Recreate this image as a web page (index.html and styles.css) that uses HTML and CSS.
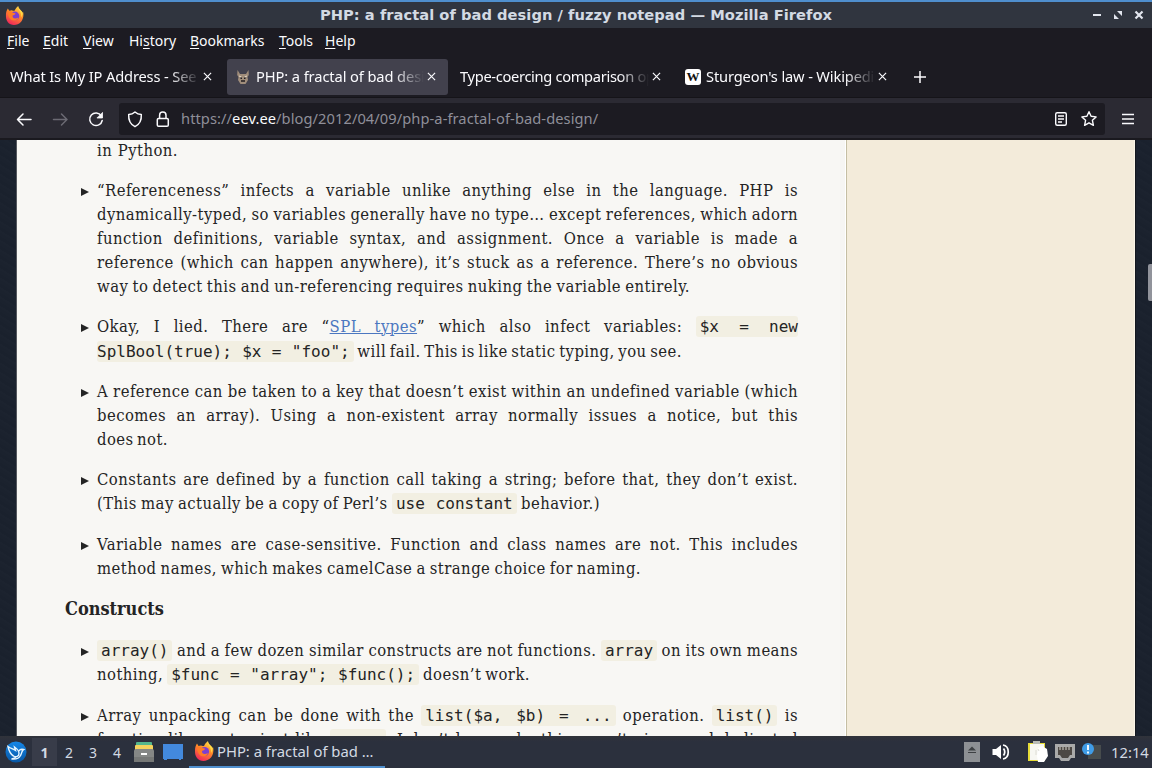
FILE: index.html
```html
<!DOCTYPE html>
<html lang="en">
<head>
<meta charset="utf-8">
<title>PHP: a fractal of bad design / fuzzy notepad</title>
<link rel="stylesheet" href="styles.css">
</head>
<body>
<svg class="defs" width="0" height="0">
  <defs>
    <linearGradient id="flame" x1="0.8" y1="0" x2="0.3" y2="1"><stop offset="0" stop-color="#ffe14a"/><stop offset=".45" stop-color="#ff8a28"/><stop offset="1" stop-color="#f0265c"/></linearGradient>
    <linearGradient id="bird" x1="0" y1="0" x2="0" y2="1"><stop offset="0" stop-color="#1687e8"/><stop offset="1" stop-color="#0757a5"/></linearGradient>
    <symbol id="fox" viewBox="0 0 20 20">
      <path d="M1 9C1 6 2 4 3 2.500L4.500 5L7 4.500C8 5 9 5 10 5C11 3 12 1.500 14 0C14 3 17 4 18.500 7L19 6C20 10 19 14 17 16.500C13 21 6 21 3 17C1 14.500 1 12 1 9Z" fill="url(#flame)"/>
      <circle cx="10.500" cy="10.500" r="4.600" fill="#7d3fd0"/>
      <path d="M3 6C5 5.500 7 6 8 7L11 7.500C11 9 9 9.500 8 10C7.500 13 11 14 14 12C13 16 7 16.500 5 13C3.500 11 3 8 3 6Z" fill="#ff7b26"/>
      <path d="M14 .5C13 4 18 6 17 12C19 9 18.500 7 18 6C16 4 14 3 14 .5Z" fill="#ffdc45"/>
    </symbol>
  </defs>
</svg>
<div class="desktop">
  <header class="titlebar">
    <svg class="title-fox" viewBox="0 0 20 20"><use href="#fox"/></svg>
    <div class="title">PHP: a fractal of bad design / fuzzy notepad — Mozilla Firefox</div>
    <svg class="win-buttons" viewBox="0 0 52 12"><path d="M1 6h8M43.500 2.500l7 7M50.500 2.500l-7 7" stroke="#e2e6ee" stroke-width="2.200" fill="none"/><path d="M25 2h5v5zM22 5v5h5z" fill="#e2e6ee"/></svg>
  </header>
  <nav class="menubar">
    <span class="m1"><u>F</u>ile</span><span class="m2"><u>E</u>dit</span><span class="m3"><u>V</u>iew</span><span class="m4">Hi<u>s</u>tory</span><span class="m5"><u>B</u>ookmarks</span><span class="m6"><u>T</u>ools</span><span class="m7"><u>H</u>elp</span>
  </nav>
  <div class="tabs">
    <div class="tab t1"><span class="label">What Is My IP Address - See</span><svg class="x" viewBox="0 0 10 10"><path d="M1 1l8 8M9 1l-8 8"/></svg></div>
    <div class="tab t2 active">
      <svg class="fav" viewBox="0 0 14 14"><path d="M1.500 0l2.500 4h6l2.500-4 .3 5-1.300 2 .5 3-2.500 4h-5L2 10l.5-3-1.300-2z" fill="#a08d7b"/><path d="M3 6l2.500 1M11 6L8.500 7" stroke="#e4d9c8"/><path d="M4.500 8.200h1.500M8 8.200h1.500M5 11h4" stroke="#201d20" stroke-width="1.500"/></svg>
      <span class="label">PHP: a fractal of bad design</span><svg class="x" viewBox="0 0 10 10"><path d="M1 1l8 8M9 1l-8 8"/></svg></div>
    <div class="tab t3"><span class="label">Type-coercing comparison operators</span><svg class="x" viewBox="0 0 10 10"><path d="M1 1l8 8M9 1l-8 8"/></svg></div>
    <div class="tab t4"><span class="wiki">W</span><span class="label">Sturgeon's law - Wikipedia</span><svg class="x" viewBox="0 0 10 10"><path d="M1 1l8 8M9 1l-8 8"/></svg></div>
    <svg class="plus" viewBox="0 0 12 12"><path d="M6 0v12M0 6h12"/></svg>
  </div>
  <div class="navbar">
    <svg class="nav-icons" viewBox="0 0 119 38" fill="none" stroke="#fbfbfe" stroke-width="1.500" stroke-linecap="round" stroke-linejoin="round">
      <path d="M31 19.500H17.500M23 14l-5.500 5.500L23 25"/>
      <path d="M53.500 19.500H67M61.500 14l5.500 5.500-5.500 5.500" stroke="#6b6a73"/>
      <path d="M101.300 15.800A6.300 6.300 0 1 0 102.200 20.500"/><path d="M102.500 12.800v5.200h-5.200z" fill="#fbfbfe" stroke-width=".8"/>
    </svg>
    <div class="urlbar">
      <svg class="url-icons" viewBox="0 0 62 32" fill="none" stroke="#fbfbfe" stroke-width="1.500" stroke-linejoin="round">
        <path d="M16 9c2 1.800 4 2.400 6.300 2.400.4 6-1.700 10-6.300 12.300-4.600-2.300-6.700-6.300-6.300-12.300C12 11.400 14 10.800 16 9z"/>
        <rect x="38.300" y="15.500" width="11" height="7.700" rx="1.300"/><path d="M40.600 15.500v-3.200a3.200 3.200 0 0 1 6.400 0v3.200"/>
      </svg>
      <div class="url">https://<b>eev.ee</b>/blog/2012/04/09/php-a-fractal-of-bad-design/</div>
      <svg class="page-icons" viewBox="0 0 44 18" fill="none" stroke="#fbfbfe" stroke-width="1.400" stroke-linejoin="round">
        <rect x="1.700" y="2.700" width="10.600" height="12.600" rx="1.500"/><path d="M4 6h6M4 9h6M4 12h4"/>
        <path d="M35 1.700l2.100 4.600 5 .6-3.700 3.400 1 5-4.400-2.500-4.400 2.500 1-5-3.700-3.400 5-.6z"/>
      </svg>
    </div>
    <svg class="burger" viewBox="0 0 12 12"><path d="M0 1.500h12M0 6h12M0 10.500h12"/></svg>
  </div>
  <div class="viewport">
    <main class="article">
      <div class="item first"><p class="ln" style="width:81px">in Python.</p></div>
      <div class="item mark">
        <p class="ln">“Referenceness” infects a variable unlike anything else in the language. PHP is</p>
        <p class="ln">dynamically-typed, so variables generally have no type… except references, which adorn</p>
        <p class="ln">function definitions, variable syntax, and assignment. Once a variable is made a</p>
        <p class="ln">reference (which can happen anywhere), it’s stuck as a reference. There’s no obvious</p>
        <p class="ln" style="width:593px">way to detect this and un-referencing requires nuking the variable entirely.</p>
      </div>
      <div class="item mark low">
        <p class="ln">Okay, I lied. There are “<a>SPL types</a>” which also infect variables: <code class="open">$x = new</code></p>
        <p class="ln" style="width:585px"><code class="close">SplBool(true); $x = "foo";</code> will fail. This is like static typing, you see.</p>
      </div>
      <div class="item mark">
        <p class="ln">A reference can be taken to a key that doesn’t exist within an undefined variable (which</p>
        <p class="ln">becomes an array). Using a non-existent array normally issues a notice, but this</p>
        <p class="ln" style="width:71px">does not.</p>
      </div>
      <div class="item mark coded">
        <p class="ln">Constants are defined by a function call taking a string; before that, they don’t exist.</p>
        <p class="ln" style="width:503px">(This may actually be a copy of Perl’s <code>use constant</code> behavior.)</p>
      </div>
      <div class="item mark">
        <p class="ln">Variable names are case-sensitive. Function and class names are not. This includes</p>
        <p class="ln" style="width:544px">method names, which makes camelCase a strange choice for naming.</p>
      </div>
      <h3>Constructs</h3>
      <div class="item mark coded">
        <p class="ln"><code>array()</code> and a few dozen similar constructs are not functions. <code>array</code> on its own means</p>
        <p class="ln" style="width:433px">nothing, <code>$func = "array"; $func();</code> doesn’t work.</p>
      </div>
      <div class="item mark">
        <p class="ln">Array unpacking can be done with the <code>list($a, $b) = ...</code> operation. <code>list()</code> is</p>
        <p class="ln">function-like syntax just like <code>array</code>. I don’t know why this wasn’t given real dedicated</p>
      </div>
    </main>
    <aside class="side"></aside>
    <div class="scroll-thumb"></div>
  </div>
  <footer class="taskbar">
    <svg class="menu-logo" viewBox="0 0 22 22"><circle cx="11" cy="11" r="10.500" fill="url(#bird)"/><path d="M3 5.500c3 2 5 2.500 7.500 4L9.500 6c3 2 4.500 3.500 4.500 6.500 0 3-3 4-5.500 2.500C5.500 13.500 4 10 3 5.500zM14 10c1-2 2.500-2 4.500-1.500-2 1-1.500 4-3 6-1.500 3-5 4-9 3.500 3-.5 4-1.500 5-2.500" fill="none" stroke="#e7f5ff" stroke-width="1.400"/></svg>
    <div class="desks"><span class="on">1</span><span>2</span><span>3</span><span>4</span></div>
    <svg class="files" viewBox="0 0 22 22"><path d="M3 2q0-1 1-1h14q1 0 1 1v4H3z" fill="#54b78d"/><path d="M2 5q0-1 1-1h16q1 0 1 1v5H2z" fill="#f5d35d"/><path d="M1 10q0-2 2-2h16q2 0 2 2v11H1z" fill="#858786"/><path d="M1 16h20v5H1z" fill="#767877"/><rect x="8" y="12" width="6" height="2" fill="#fff"/></svg>
    <svg class="show" viewBox="0 0 20 16"><path d="M0 0h20v15h-2v1h-2v-1H4v1H1v-1H0z" fill="#4389dd"/></svg>
    <div class="task"><svg viewBox="0 0 20 20"><use href="#fox"/></svg><span>PHP: a fractal of bad …</span></div>
    <svg class="tray" viewBox="0 0 140 24">
      <rect x="2" y="2" width="16" height="20" fill="#8d9094"/><path d="M6 10.500l4-4 4 4zM6 12h8v1H6z" fill="#3d4043"/>
      <path d="M30.500 9h3.500l5-4v14l-5-4h-3.500z" fill="#fff"/><path d="M41.500 8.500q2.500 3.500 0 7M41 5c7 1 7 13 0 14" stroke="#fff" stroke-width="1.700" fill="none"/>
      <path d="M66 3h17v18H66z" fill="#e6dc38"/><path d="M68 4h14v16H68z" fill="#f7f7f2"/><path d="M71 1h7v3h-7z" fill="#b9bbb5"/><path d="M76 8l4-2 5 3 1 7-4 6h-6l-1-6z" fill="#fff"/><path d="M74 10v5M76 9l1 2" stroke="#dcdcd4"/>
      <path d="M93 4h20v14h-4l-2 3h-8l-2-3h-4z" fill="#a9a9a9"/><path d="M96 7h14v8h-2l-2 3h-6l-2-3h-2z" fill="#4d4844"/><path d="M98 7v3M101 7v3M104 7v3M107 7v3" stroke="#d5d2ca"/>
      <path d="M126 5h13v14h-13z" fill="#474c4d"/><circle cx="126" cy="9" r="6" fill="#3f9be6"/><path d="M126 5v5M126 11.500v2" stroke="#fff" stroke-width="1.800"/>
    </svg>
    <div class="clock">12:14</div>
  </footer>
</div>
</body>
</html>
```
FILE: styles.css
```css
* { box-sizing: border-box; }
body { margin: 0; background: #1c1b22; overflow: hidden; }
svg { display: block; flex: none; overflow: visible; }
.defs { position: absolute; }
.desktop { width: 1152px; height: 768px; display: flex; flex-direction: column; overflow: hidden; font-family: "Noto Sans", sans-serif; color: #fbfbfe; }

.titlebar { height: 28px; flex: none; display: flex; align-items: center; border-top: 2px solid #4f8fce; background: #30353f; padding: 0 8px 0 5px; }
.title-fox { width: 19px; height: 19px; }
.title { flex: 1; text-align: center; padding: 0 0 1px 36px; font: bold 14.670px "DejaVu Sans", sans-serif; letter-spacing: .03px; color: #d3dae3; white-space: nowrap; }
.win-buttons { width: 52px; height: 12px; }

.menubar { height: 27px; flex: none; display: flex; align-items: center; padding: 0 0 2px 7px; font-size: 14px; }
.menubar span { white-space: nowrap; }
.menubar u { text-underline-offset: 2px; text-decoration-thickness: 1px; }
.m1 { width: 36px; } .m2 { width: 40px; } .m3 { width: 46px; } .m4 { width: 61px; } .m5 { width: 89px; } .m6 { width: 46px; }

.tabs { height: 43px; flex: none; display: flex; align-items: center; padding-top: 1px; font-size: 14.670px; border-bottom: 1px solid #151419; }
.tab { height: 36px; display: flex; align-items: center; border-radius: 3px; flex: none; }
.tab .label { flex: 1; min-width: 0; overflow: hidden; white-space: nowrap; padding-bottom: 1px; -webkit-mask-image: linear-gradient(to right, #000 calc(100% - 30px), transparent); mask-image: linear-gradient(to right, #000 calc(100% - 30px), transparent); }
.t1 { width: 227px; padding: 0 15px 0 10px; }
.t1 .label { letter-spacing: -.15px; }
.t2 { width: 221px; padding: 0 12px 0 9px; }
.t2 .label { letter-spacing: -.1px; }
.t3 { width: 227px; padding: 0 14px 0 12px; }
.t3 .label { letter-spacing: -.32px; }
.t4 { width: 225px; padding: 0 13px 0 10px; }
.t4 .label { letter-spacing: -.15px; }
.active { background: #42414d; }
.x { width: 9px; height: 9px; margin-left: 3px; }
.x path { stroke: #fbfbfe; stroke-width: 1.300; }
.fav { width: 14px; height: 14px; margin-right: 6px; }
.wiki { width: 16px; height: 16px; margin-right: 5px; border-radius: 3px; background: #fff; color: #111; font: bold 13px/16px "Liberation Serif", serif; display: flex; justify-content: center; }
.plus { width: 12px; height: 12px; margin-left: 14px; }
.plus path, .burger path { stroke: #fbfbfe; stroke-width: 1.500; }

.navbar { height: 42px; flex: none; display: flex; align-items: center; background: #2b2a33; border-bottom: 2px solid #1a191f; padding-top: 2px; }
.nav-icons { width: 119px; height: 38px; }
.urlbar { width: 986px; height: 32px; display: flex; align-items: center; background: #1c1b22; border-radius: 3px; }
.url-icons { width: 62px; height: 32px; }
.url { flex: 1; font-size: 14.670px; letter-spacing: .07px; color: #8f8f99; white-space: nowrap; padding-bottom: 2px; }
.url b { font-weight: normal; color: #fbfbfe; }
.page-icons { width: 44px; height: 18px; margin-right: 7px; }
.burger { width: 12px; height: 12px; margin-left: 17px; }

.viewport { height: 596px; flex: none; position: relative; display: flex; overflow: hidden; padding-left: 17px; background: repeating-linear-gradient(32deg, #1b222e 0 3px, #1c232f 3px 5px, #1a212d 5px 8px); }
.article { width: 829px; flex: none; padding: 0 0 0 80px; background: #f8f7f4; border-right: 1px solid #fff; box-shadow: inset -5px 0 0 #f6f5f3, -1px 0 #55585e; font: 16.500px/24px "DejaVu Serif Condensed", "DejaVu Serif", serif; font-stretch: condensed; letter-spacing: .45px; word-spacing: -3.200px; color: #242424; }
.side { width: 289px; flex: none; background: #f3ebda; border-left: 1px solid #c5bea4; border-right: 1px solid #faf5e8; box-shadow: 1px 0 #14171d; }
.scroll-thumb { position: absolute; right: 0; top: 124px; width: 4px; height: 37px; border-radius: 2px 0 0 2px; background: #91939b; }
.ln { margin: 0; width: 701px; height: 24px; white-space: nowrap; text-align: justify; text-align-last: justify; }
.item { margin-bottom: 16px; position: relative; }
.first { margin-top: -1px; }
.mark::before { content: ""; position: absolute; left: -16px; top: 9px; border-left: 8px solid #242424; border-top: 4px solid transparent; border-bottom: 4px solid transparent; }
.coded { padding-bottom: 1px; }
.low .ln:last-child { margin-top: 1px; }
.article a { color: #4c77c0; text-decoration: underline; text-decoration-thickness: 1px; }
code { font: 16px/20px "DejaVu Sans Mono", monospace; letter-spacing: 0; word-spacing: -1px; padding: 1px 4px; border-radius: 3px; background: #f2efe2; }
code.open { padding-right: 0; }
code.close { padding-left: 0; }
h3 { margin: 3px 0 18px -32px; font: bold 18px/24px "DejaVu Serif Condensed", "DejaVu Serif", serif; font-stretch: condensed; letter-spacing: 0; word-spacing: 0; }

.taskbar { height: 32px; flex: none; display: flex; align-items: center; background: #2d3139; background-image: linear-gradient(#30333a, #2b303d 6px); font-family: "Noto Sans", sans-serif; color: #d3dae3; position: relative; }
.menu-logo { width: 22px; height: 22px; margin-left: 5px; }
.desks { display: flex; margin-left: 5px; font-size: 14px; }
.desks span { width: 24px; height: 28px; line-height: 29px; text-align: center; }
.desks .on { width: 25px; background: #383c49; font-weight: bold; }
.files { width: 22px; height: 22px; margin-left: 4px; }
.show { width: 20px; height: 16px; margin-left: 8px; }
.task { width: 196px; height: 32px; margin-left: 6px; padding: 0 0 0 5px; display: flex; align-items: center; border-bottom: 2px solid #4f8fce; font-size: 14.800px; white-space: nowrap; }
.task svg { width: 20px; height: 20px; margin-right: 3px; }
.tray { width: 140px; height: 24px; margin-left: 577px; }
.clock { margin-left: 9px; padding-bottom: 1px; font-size: 14.800px; }
```
